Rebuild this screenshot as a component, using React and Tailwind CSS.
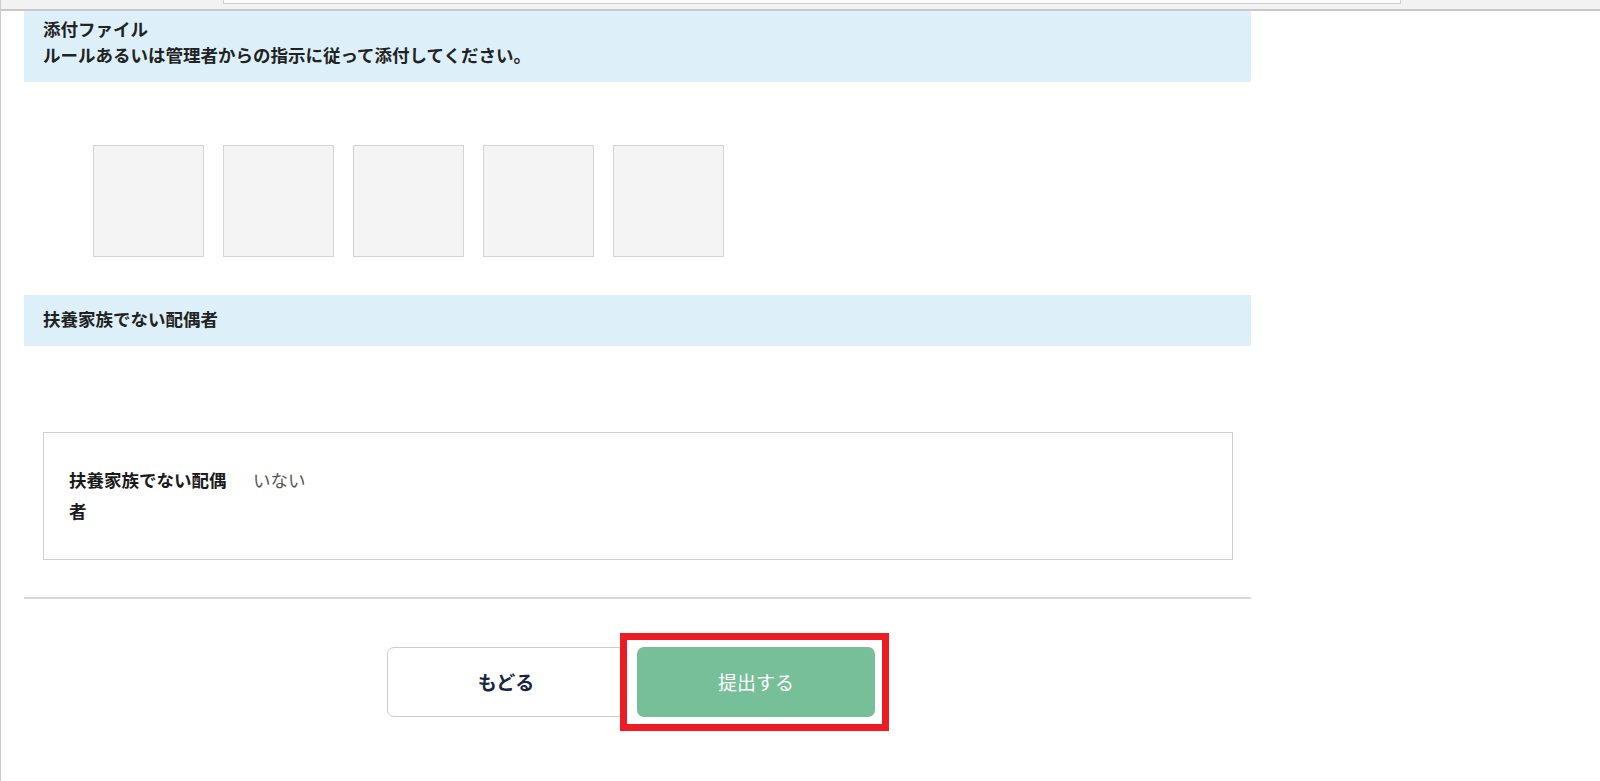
const thumbs = [1, 2, 3, 4, 5]

function SectionHeader({ children, className = '' }) {
  return (
    <div className={`bg-[#ddf0f9] pl-[19px] font-bold text-[17.5px] leading-[26px] text-[#222] ${className}`}>
      {children}
    </div>
  )
}

export default function App() {
  return (
    <div
      className="min-h-[781px] bg-white border-l border-[#cccccc]"
      style={{ fontFamily: '"Noto Sans CJK JP", "Noto Sans", sans-serif' }}
    >
      {/* top strip */}
      <div className="h-[11px] bg-[#f2f2f2] border-b-2 border-[#c9c9c9]">
        <div className="ml-[222px] w-[1178px] h-[4px] bg-[#fafafa] border border-t-0 border-[#cfcfcf]" />
      </div>

      <div className="ml-[23px] w-[1227px]">
        <SectionHeader className="pt-[5px] pb-[14px]">
          <p>添付ファイル</p>
          <p>ルールあるいは管理者からの指示に従って添付してください。</p>
        </SectionHeader>

        <div className="flex gap-[19px] pl-[69px] mt-[63px]">
          {thumbs.map((t) => (
            <div key={t} className="w-[111px] h-[112px] bg-[#f4f4f4] border border-[#d4d4d4]" />
          ))}
        </div>

        <SectionHeader className="mt-[38px] pt-[11px] pb-[14px]">
          <p>扶養家族でない配偶者</p>
        </SectionHeader>

        <div className="mt-[86px] ml-[19px] mr-[18px] border border-[#cfcfcf] h-[128px] flex pl-[25px] pt-[31px] text-[17.5px] leading-[31px]">
          <div className="w-[165px] font-bold text-[#1a1a1a]">扶養家族でない配偶者</div>
          <div className="ml-[19px] text-[#555]">いない</div>
        </div>

        <div className="mt-[37px] h-[2px] bg-[#d9d9d9]" />

        <div className="flex gap-[12px] pl-[363px] mt-[48px]">
          <button className="w-[238px] h-[70px] rounded-[7px] border border-[#cccccc] bg-white font-bold text-[19px] text-[#1a2540]">
            もどる
          </button>
          <div className="relative">
            <div className="absolute -left-[17px] -top-[14px] -right-[14px] -bottom-[14px] border-[7px] border-[#ed1c24]" />
            <button className="relative w-[238px] h-[70px] rounded-[7px] bg-[#77bf99] text-white text-[19px]">
              提出する
            </button>
          </div>
        </div>
      </div>
    </div>
  )
}
